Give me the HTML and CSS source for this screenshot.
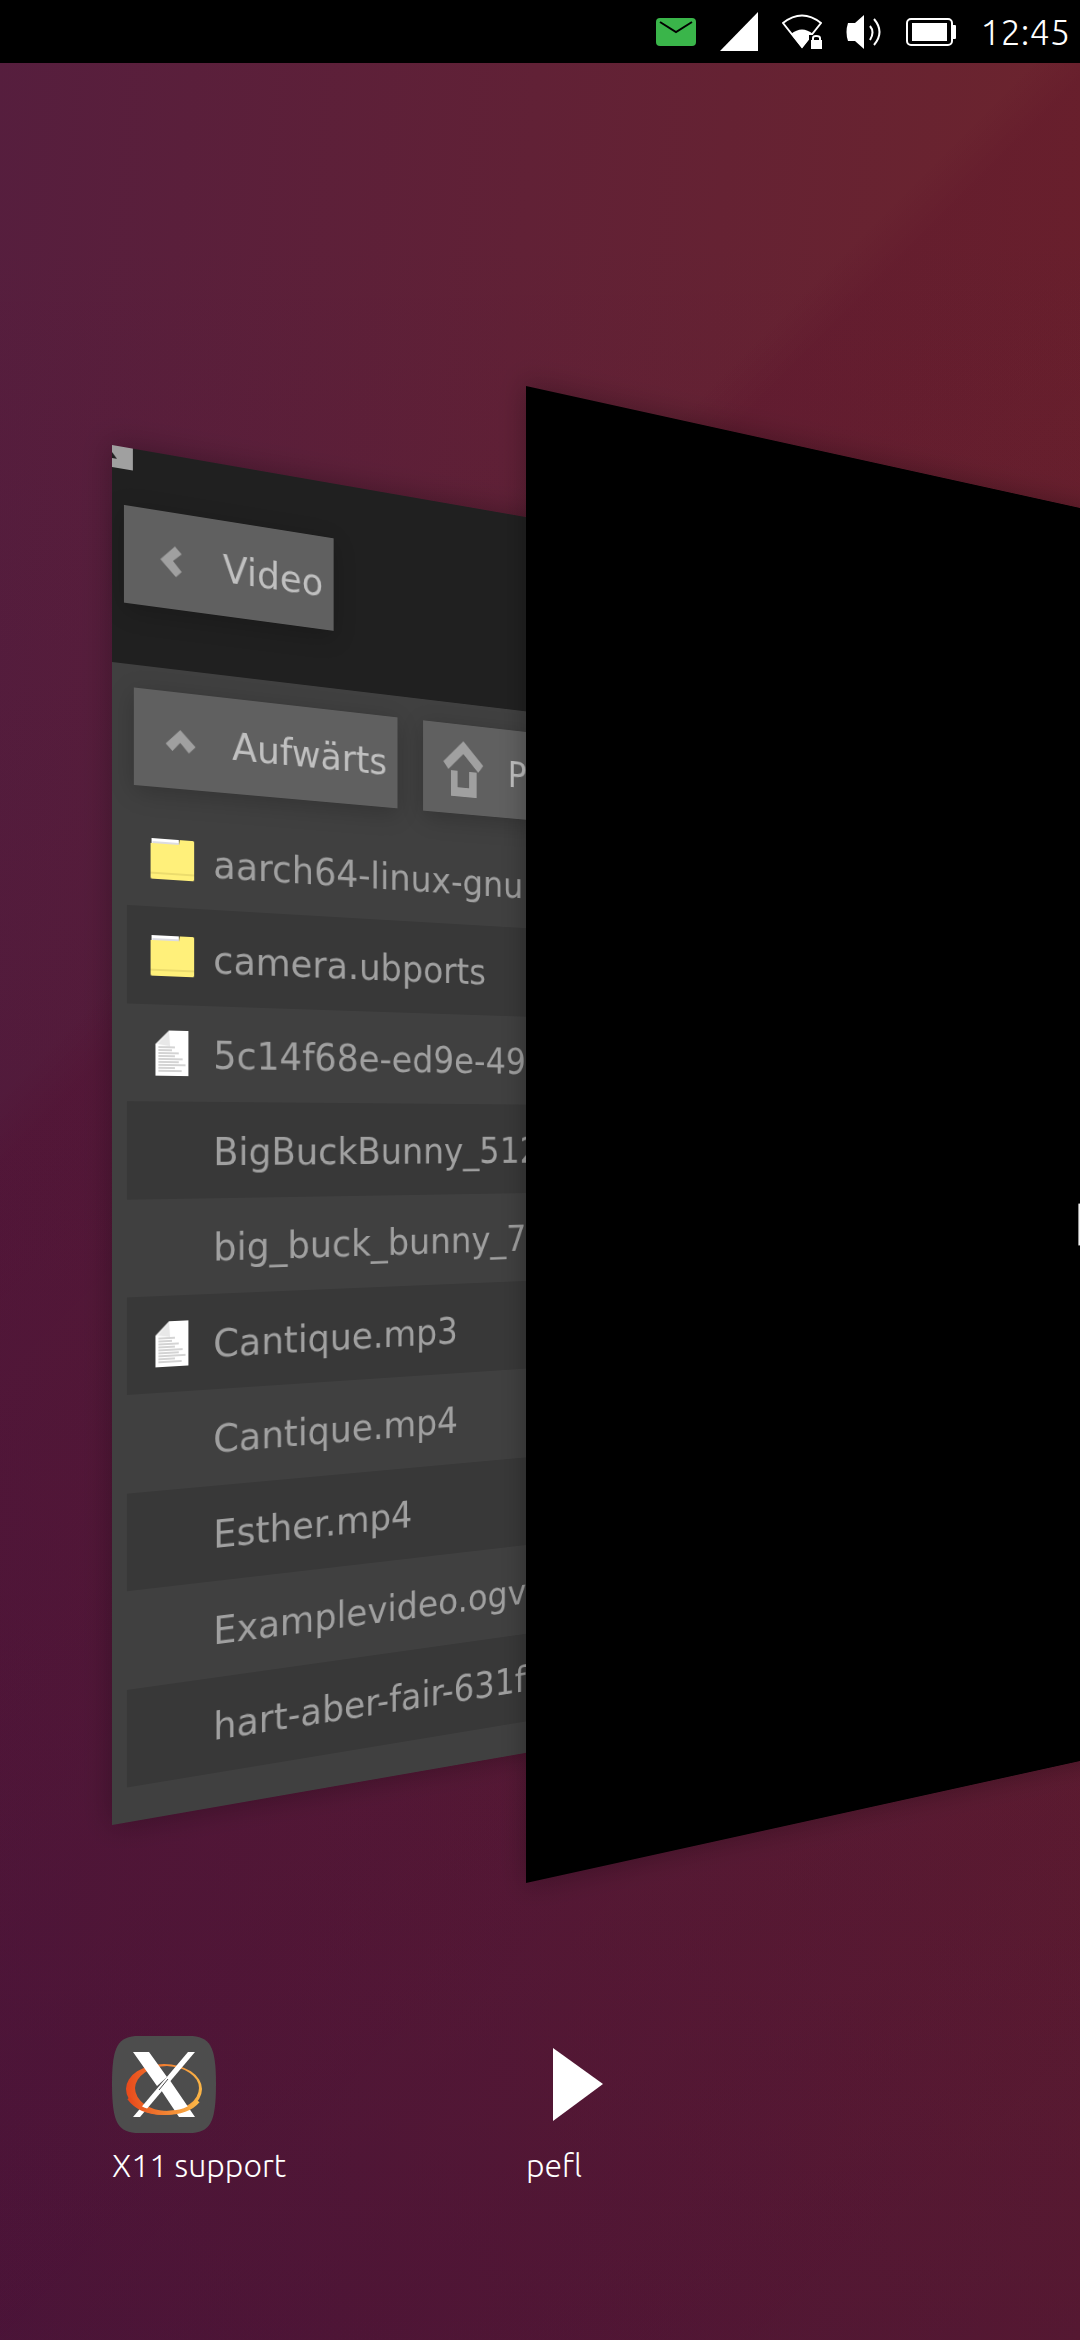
FILE: index.html
```html
<!DOCTYPE html>
<html lang="de">
<head>
    <meta charset="UTF-8">
    <meta name="viewport" content="width=device-width, initial-scale=1.0">
    <title>App Switcher</title>
    <link rel="stylesheet" href="styles.css">
</head>
<body>
    <header class="status-bar">
        <svg class="status-icon" width="40" height="28" viewBox="0 0 40 28">
            <rect width="40" height="28" rx="4" fill="#3ab54a"/>
            <path d="M4 4 L20 14 L36 4" fill="none" stroke="#000" stroke-width="2"/>
        </svg>
        <svg class="status-icon" width="38" height="39" viewBox="0 0 38 39">
            <path d="M0 39 L38 0 V39 Z" fill="#fff"/>
        </svg>
        <svg class="status-icon" width="40" height="36" viewBox="0 0 40 36">
            <path d="M1 9 Q20 -6 39 9 L20 33 Z" fill="none" stroke="#fff" stroke-width="2"/>
            <path d="M9 20 Q20 11 31 20 L20 34 Z" fill="#fff"/>
            <rect x="27" y="21" width="13" height="15" fill="#000"/>
            <rect x="29" y="26" width="11" height="9" fill="#fff"/>
            <path d="M31 27 V24 Q31 22 34 22 Q38 22 38 24 V27" fill="none" stroke="#fff" stroke-width="2"/>
        </svg>
        <svg class="status-icon" width="36" height="36" viewBox="0 0 36 36">
            <path d="M2 9 H9 L18 1 V35 L9 27 H2 Q-1 18 2 9 Z" fill="#fff"/>
            <path d="M24 12 Q29 18 24 26 M28 5 Q39 18 28 31" fill="none" stroke="#fff" stroke-width="2"/>
        </svg>
        <svg class="status-icon" width="50" height="28" viewBox="0 0 50 28">
            <rect x="1" y="1" width="45" height="26" rx="4" fill="none" stroke="#fff" stroke-width="2"/>
            <rect x="6" y="5" width="35" height="18" fill="#fff"/>
            <rect x="46" y="7" width="4" height="14" rx="1" fill="#fff"/>
        </svg>
        <time>12:45</time>
    </header>

    <main>
        <section class="switcher windows">
            <article class="window files">
                <div class="title-bar">
                    <svg class="corner" width="21" height="22" viewBox="0 0 21 22">
                        <rect width="21" height="22" fill="#a0a0a0"/>
                        <path d="M0 7 L5 13 H0 Z" fill="#202020"/>
                    </svg>
                    <button class="tool-button" type="button">
                        <svg width="22" height="31" viewBox="0 0 22 31"><path d="M15 0 L22 7 L13 15 L22 25 L16 31 L0 15 Z" fill="#a0a0a0"/></svg>
                        Video
                    </button>
                </div>
                <div class="toolbar">
                    <button class="tool-button" type="button">
                        <svg width="31" height="23" viewBox="0 0 31 23"><path d="M15 0 L31 16 L24 23 L15 13 L7 22 L0 15 Z" fill="#a0a0a0"/></svg>
                        Aufwärts
                    </button>
                    <button class="tool-button" type="button">
                        <svg width="48" height="62" viewBox="0 0 48 62">
                            <path d="M24 0 L48 25 L42 33 L24 14 L6 32 L0 24 Z" fill="#a0a0a0"/>
                            <path d="M9 33 H17 V51 H31 V33 H40 V61 H9 Z" fill="#a0a0a0"/>
                        </svg>
                        P
                    </button>
                </div>
                <ul class="file-list">
                    <li><svg class="file-icon" width="45" height="41"><use href="#folder"/></svg><span>aarch64-linux-gnu</span></li>
                    <li><svg class="file-icon" width="45" height="41"><use href="#folder"/></svg><span>camera.ubports</span></li>
                    <li><svg class="file-icon" width="34" height="46"><use href="#document"/></svg><span>5c14f68e-ed9e-49</span></li>
                    <li><span>BigBuckBunny_512</span></li>
                    <li><span>big_buck_bunny_7</span></li>
                    <li><svg class="file-icon" width="34" height="46"><use href="#document"/></svg><span>Cantique.mp3</span></li>
                    <li><span>Cantique.mp4</span></li>
                    <li><span>Esther.mp4</span></li>
                    <li><span>Examplevideo.ogv.</span></li>
                    <li><span>hart-aber-fair-631f</span></li>
                </ul>
            </article>
            <article class="window player">
                <div class="player-mark"></div>
            </article>
        </section>

        <section class="switcher captions">
            <a class="app" href="#">
                <svg width="104" height="97" viewBox="0 0 104 97">
                    <defs>
                        <linearGradient id="ring" x1="0" x2="1">
                            <stop offset="0" stop-color="#e8491b"/>
                            <stop offset="1" stop-color="#fbb647"/>
                        </linearGradient>
                    </defs>
                    <path d="M0 48 C0 10 6 0 27 0 H77 C98 0 104 10 104 48 C104 87 98 97 77 97 H27 C6 97 0 87 0 48 Z" fill="#4d4d4d"/>
                    <path d="M14 53 A38 25 0 0 1 90 53 A38 26 0 0 1 14 53 Z M23 52 A32 23 0 0 0 55 75 A33 23 0 0 0 87 52 A34 22 0 0 0 55 30 A32 23 0 0 0 23 52 Z" fill="url(#ring)" fill-rule="evenodd"/>
                    <path d="M21 16 H37 L55 41 L45 50 Z M57 43 L83 81 H67 L49 54 Z" fill="#fff"/>
                    <path d="M76 16 H83 L28 81 H21 Z" fill="#fff"/>
                    <path d="M47 54 L56 43" stroke="#4d4d4d" stroke-width="1"/>
                    <path d="M17 62 Q28 77 52 77 Q76 77 86 65" fill="none" stroke="url(#ring)" stroke-width="4"/>
                </svg>
                <span>X11 support</span>
            </a>
            <a class="app" href="#">
                <svg width="104" height="97" viewBox="0 0 104 97"><path d="M27 12 L77 48 L27 85 Z" fill="#fff"/></svg>
                <span>pefl</span>
            </a>
        </section>
    </main>

    <svg width="0" height="0" class="symbols">
        <symbol id="folder" viewBox="0 0 45 41">
            <path d="M1 0 H29 V6 H1 Z" fill="#fff"/>
            <path d="M0 5 H29 L30 0 H44 L45 1 V40 L44 41 H1 L0 40 Z" fill="#fff07a"/>
            <path d="M2 4 H29" stroke="#b8b8c4" stroke-width="1"/>
            <path d="M0 35 H45" stroke="#d8c860" stroke-width="1"/>
        </symbol>
        <symbol id="document" viewBox="0 0 34 46">
            <path d="M14 0 H34 V46 H0 V14 Z" fill="#fff"/>
            <path d="M14 1 L15 16 L2 14 Z" fill="#e8e8e8"/>
            <path d="M3 17 H20 M3 20 H17 M3 23 H24 M3 26 H20 M3 29 H28 M3 32 H24 M3 35 H31 M3 38 H20 M3 41 H27" stroke="#a8a8a8" stroke-width="1"/>
        </symbol>
    </svg>
</body>
</html>
```
FILE: styles.css
```css
* {
    box-sizing: border-box;
}
body {
    margin: 0;
    min-height: 100vh;
    overflow-x: hidden;
    display: flex;
    flex-direction: column;
    font-family: Ubuntu, "Open Sans", "Noto Sans", sans-serif;
    font-weight: 300;
    color: white;
    background:
        linear-gradient(315deg, rgba(70, 0, 40, 0) 0%, rgba(80, 0, 36, 0.15) 66%, transparent 68%),
        linear-gradient(180deg, rgba(60, 12, 56, 0) 10%, rgba(60, 12, 56, 0.52) 100%),
        linear-gradient(95deg, #561e3e, #70252b);
}
.status-bar {
    display: flex;
    align-items: center;
    justify-content: flex-end;
    height: 63px;
    padding-right: 10px;
    background-color: black;
    font-size: 36px;
}
.status-icon {
    margin-right: 24px;
}
main {
    flex: 1;
    overflow: hidden;
}
.switcher {
    display: grid;
    grid-template-columns: 414px 1fr;
    padding-left: 112px;
}
.windows {
    align-items: center;
    margin-top: 323px;
    perspective: 1800px;
    perspective-origin: 50% 50%;
}
.window {
    transform-origin: left center;
    box-shadow: 0 0 30px rgba(0, 0, 0, 0.3);
}
.files {
    width: 720px;
    background-color: #404040;
    color: #a0a0a0;
    font-family: "DejaVu Sans", sans-serif;
    font-weight: 400;
    font-size: 39px;
    transform: rotateY(27deg);
}
.player {
    display: flex;
    align-items: center;
    width: 900px;
    height: 1497px;
    padding: 214px 0 0 744px;
    background-color: black;
    transform: rotateY(28deg);
}
.player-mark {
    width: 20px;
    height: 50px;
    background-color: #f0f0f0;
}
.title-bar {
    height: 217px;
    padding-left: 12px;
    background-color: #202020;
}
.corner {
    display: block;
    margin-left: -12px;
    margin-bottom: 36px;
}
.tool-button {
    height: 98px;
    display: flex;
    align-items: center;
    padding: 0 12px 0 0;
    border: none;
    background-color: #606060;
    color: #c0c0c0;
    font: inherit;
    box-shadow: 0 6px 24px rgba(0, 0, 0, 0.2);
}
.tool-button svg {
    width: 96px;
    margin-right: 6px;
}
.toolbar {
    display: flex;
    gap: 30px;
    padding: 23px 22px;
}
.file-list {
    display: grid;
    grid-auto-rows: 1fr;
    height: 984px;
    margin: 0 15px 35px;
    padding: 0;
    list-style: none;
}
.file-list li {
    display: grid;
    grid-template-columns: 89px 1fr;
    align-items: center;
    white-space: nowrap;
}
.file-list li:nth-child(even) {
    background-color: #383838;
}
.file-list span {
    grid-column: 2;
    padding-top: 4px;
}
.file-icon {
    margin-left: 24px;
}
.file-icon[width="34"] {
    margin-left: 29px;
}
.captions {
    margin-top: 153px;
}
.app {
    display: flex;
    flex-direction: column;
    align-items: flex-start;
    gap: 14px;
    color: white;
    font-size: 32px;
    text-decoration: none;
}
.symbols {
    position: absolute;
}
```
